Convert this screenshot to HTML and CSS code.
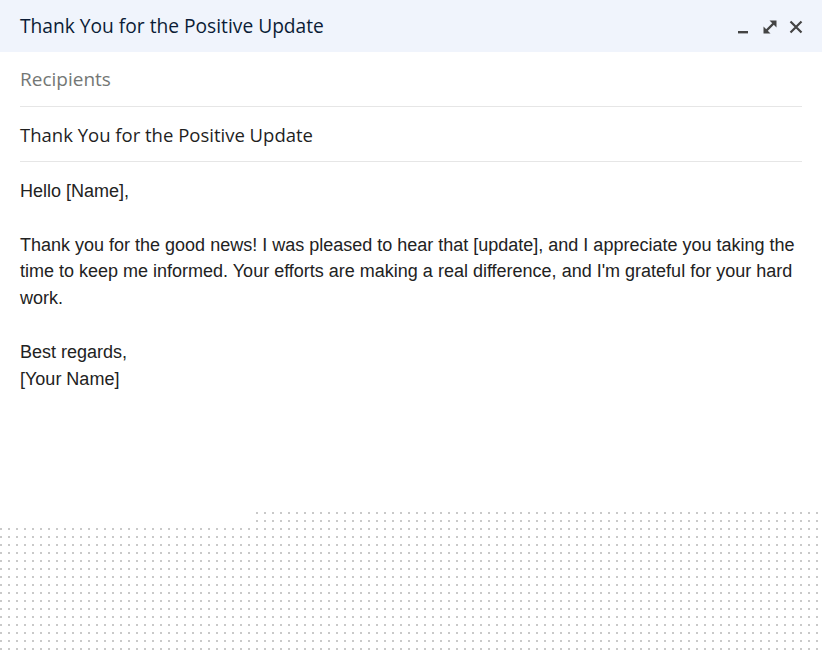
FILE: index.html
```html
<!DOCTYPE html>
<html lang="en">
<head>
    <meta charset="UTF-8">
    <meta name="viewport" content="width=device-width, initial-scale=1.0">
    <title>Thank You for the Positive Update</title>
    <link rel="stylesheet" href="styles.css">
</head>
<body>
    <div class="compose">
        <div class="compose-header">
            <h1 class="compose-title">Thank You for the Positive Update</h1>
            <div class="window-actions">
                <!-- simge küçült -->
                <button class="action-btn" title="Minimize">
                    <svg width="16" height="16" viewBox="0 0 16 16">
                        <rect x="2" y="12" width="10" height="2.4" fill="#444"/>
                    </svg>
                </button>
                <!-- tam ekran -->
                <button class="action-btn" title="Full screen">
                    <svg width="16" height="16" viewBox="0 0 16 16">
                        <path d="M3.5 12.5 L12.5 3.5" stroke="#444" stroke-width="2.4" fill="none"/>
                        <path d="M7.5 1.5 H14.5 V8.5 Z" fill="#444"/>
                        <path d="M1.5 7.5 V14.5 H8.5 Z" fill="#444"/>
                    </svg>
                </button>
                <!-- kapat -->
                <button class="action-btn" title="Close">
                    <svg width="16" height="16" viewBox="0 0 16 16">
                        <path d="M2.5 2.5 L13.5 13.5 M13.5 2.5 L2.5 13.5" stroke="#444" stroke-width="2.2" fill="none"/>
                    </svg>
                </button>
            </div>
        </div>

        <div class="field recipients">Recipients</div>
        <div class="field subject">Thank You for the Positive Update</div>

        <div class="message">
            <p>Hello [Name],</p>
            <p>Thank you for the good news! I was pleased to hear that [update], and I appreciate you taking the time to keep me informed. Your efforts are making a real difference, and I'm grateful for your hard work.</p>
            <p>Best regards,<br>[Your Name]</p>
        </div>

        <div class="dots"></div>
    </div>
</body>
</html>
```

FILE: styles.css
```css
html, body {
    margin: 0;
    padding: 0;
    height: 100%;
}
body {
    background-color: #fff;
    font-family: "Liberation Sans", Arial, sans-serif;
}
.compose {
    display: flex;
    flex-direction: column;
    height: 100vh;
}
.compose-header {
    display: flex;
    align-items: center;
    justify-content: space-between;
    height: 52px;
    padding: 0 18px 0 20px;
    background-color: #f0f4fc;
    flex: none;
}
.compose-title {
    margin: 0 0 2px;
    font-family: "Open Sans", sans-serif;
    font-size: 19.2px;
    font-weight: 500;
    color: #0b1c36;
}
.window-actions {
    display: flex;
    gap: 10px;
    padding-top: 1px;
}
.action-btn {
    border: none;
    background: none;
    padding: 0;
    width: 16px;
    height: 16px;
    cursor: pointer;
}
.action-btn svg {
    display: block;
}
.field {
    display: flex;
    align-items: center;
    height: 54px;
    margin: 0 20px;
    border-bottom: 1px solid #e6e6e6;
    font-family: "Open Sans", sans-serif;
    flex: none;
}
.recipients {
    font-size: 19px;
    color: #747775;
}
.subject {
    font-size: 18.5px;
    color: #1f1f1f;
}
.message {
    flex: 1;
    padding: 16px 20px 0;
    font-size: 18px;
    line-height: 26.8px;
    color: #222;
}
.message p {
    margin: 0 0 26.8px;
}
.dots {
    flex: none;
    height: 142px;
    background-image:
        linear-gradient(#fff, #fff),
        radial-gradient(circle at 1px 1px, #c9c9c9 0.9px, transparent 1.4px);
    background-size: 252px 16px, 8px 8px;
    background-repeat: no-repeat, repeat;
    background-position: 0 0, 0 0;
}
```
